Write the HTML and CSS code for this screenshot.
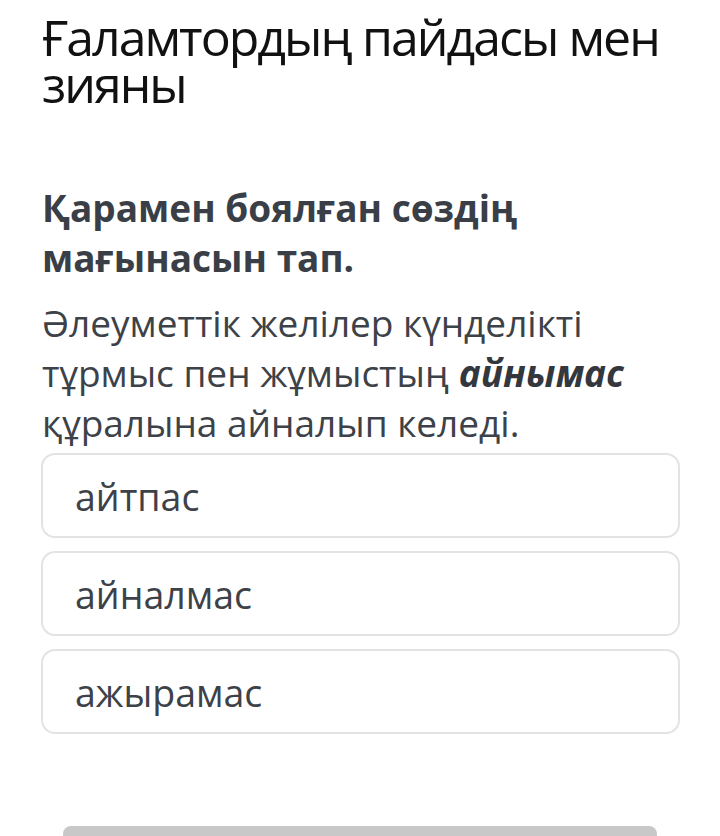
FILE: index.html
```html
<!DOCTYPE html>
<html lang="kk">
<head>
<meta charset="utf-8">
<link rel="stylesheet" href="styles.css">
</head>
<body>
<div class="page">
  <h1 class="title">Ғаламтордың пайдасы мен зияны</h1>
  <h2 class="question">Қарамен боялған сөздің мағынасын тап.</h2>
  <p class="sentence">Әлеуметтік желілер күнделікті тұрмыс пен жұмыстың <b><i>айнымас</i></b> құралына айналып келеді.</p>
  <div class="options">
    <div class="option">айтпас</div>
    <div class="option">айналмас</div>
    <div class="option">ажырамас</div>
  </div>
  <div class="bar"></div>
</div>
</body>
</html>
```
FILE: styles.css
```css
html, body {
  margin: 0;
  padding: 0;
  background: #ffffff;
}
body {
  font-family: "Open Sans", "Noto Sans", sans-serif;
  overflow: hidden;
  height: 836px;
}
.page {
  padding: 14px 40px 0 42px;
  display: flex;
  flex-direction: column;
}
.title {
  margin: 0;
  font-weight: 400;
  font-size: 50px;
  line-height: 47px;
  letter-spacing: -2px;
  color: #111111;
}
.question {
  margin: 75px 0 0 0;
  font-weight: 700;
  font-size: 37px;
  line-height: 50px;
  color: #3a3f47;
}
.sentence {
  margin: 15px 0 0 0;
  font-size: 37px;
  line-height: 50px;
  color: #3d4148;
}
.sentence b {
  color: #33373e;
}
.options {
  display: flex;
  flex-direction: column;
  gap: 13px;
  margin-top: 5px;
  margin-left: -1px;
}
.option {
  box-sizing: border-box;
  height: 85px;
  border: 2px solid #e3e3e3;
  border-radius: 14px;
  padding: 2px 0 0 32px;
  display: flex;
  align-items: center;
  font-size: 37.5px;
  color: #3d4148;
}
.bar {
  margin: 92px 23px 0 21px;
  height: 30px;
  background: #c8c8c8;
  border-radius: 8px;
}
```
